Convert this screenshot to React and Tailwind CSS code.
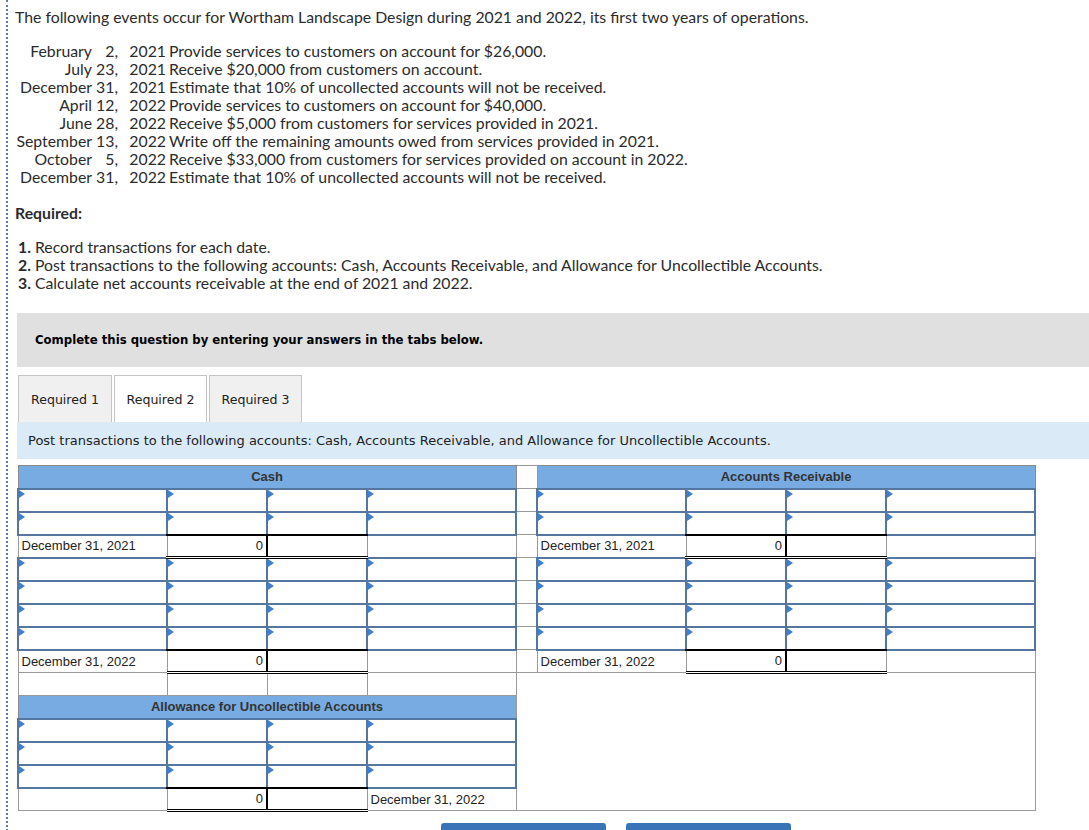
import React from 'react'

const events = [
  ['February', '2,', '2021', 'Provide services to customers on account for $26,000.'],
  ['July', '23,', '2021', 'Receive $20,000 from customers on account.'],
  ['December', '31,', '2021', 'Estimate that 10% of uncollected accounts will not be received.'],
  ['April', '12,', '2022', 'Provide services to customers on account for $40,000.'],
  ['June', '28,', '2022', 'Receive $5,000 from customers for services provided in 2021.'],
  ['September', '13,', '2022', 'Write off the remaining amounts owed from services provided in 2021.'],
  ['October', '5,', '2022', 'Receive $33,000 from customers for services provided on account in 2022.'],
  ['December', '31,', '2022', 'Estimate that 10% of uncollected accounts will not be received.'],
]

function InputCell() {
  return (
    <td className="relative border-2 border-[#55779f] bg-white p-0">
      <span className="absolute left-0 top-0 h-0 w-0 border-y-[4px] border-l-[6px] border-y-transparent border-l-[#3f7fcf]"></span>
    </td>
  )
}

function InputRow() {
  return (
    <tr className="h-[23px]">
      <InputCell />
      <InputCell />
      <InputCell />
      <InputCell />
      <td className="border border-[#9a9a9a]"></td>
      <InputCell />
      <InputCell />
      <InputCell />
      <InputCell />
    </tr>
  )
}

function BalanceCells({ label }) {
  return (
    <>
      <td className="border border-[#9a9a9a] pl-[3px]">{label}</td>
      <td className="border-t-2 border-l border-r-2 border-b-[3px] border-t-black border-l-[#9a9a9a] border-r-black border-b-black border-double pr-[3px] text-right">0</td>
      <td className="border-t-2 border-b-[3px] border-r border-t-black border-b-black border-r-[#9a9a9a] border-double"></td>
      <td className="border border-[#9a9a9a]"></td>
    </>
  )
}

function BalanceRow({ label }) {
  return (
    <tr className="h-[23px]">
      <BalanceCells label={label} />
      <td className="border border-[#9a9a9a]"></td>
      <BalanceCells label={label} />
    </tr>
  )
}

export default function App() {
  return (
    <div className="min-h-[830px] bg-white pl-[6px] text-[#2b2b2b]">
      <div className="min-h-[830px] border-l-2 border-dotted border-[#5a7aa8] pl-[7px] pt-[8px]">
        <div className="text-[15.8px] leading-[18px]" style={{ fontFamily: 'Lato, "Liberation Sans", sans-serif' }}>
          <p>The following events occur for Wortham Landscape Design during 2021 and 2022, its first two years of operations.</p>
          <div className="mt-[16px] grid grid-cols-[77px_26px_48px_1fr]">
            {events.map((e, i) => (
              <React.Fragment key={i}>
                <span className="text-right">{e[0]}</span>
                <span className="text-right">{e[1]}</span>
                <span className="text-right">{e[2]}</span>
                <span className="pl-[3px]">{e[3]}</span>
              </React.Fragment>
            ))}
          </div>
          <p className="mt-[18px] font-bold">Required:</p>
          <div className="mt-[16px] pl-[3px]">
            <p><b>1.</b> Record transactions for each date.</p>
            <p><b>2.</b> Post transactions to the following accounts: Cash, Accounts Receivable, and Allowance for Uncollectible Accounts.</p>
            <p><b>3.</b> Calculate net accounts receivable at the end of 2021 and 2022.</p>
          </div>
        </div>

        <div className="ml-[2px] mt-[21px]" style={{ fontFamily: '"DejaVu Sans", sans-serif' }}>
          <div
            className="flex h-[54px] items-center bg-[#e0e0e0] pl-[18px] text-[13px] font-bold text-black"
            style={{ fontFamily: '"DejaVu Sans Condensed", "DejaVu Sans", sans-serif' }}
          >
            Complete this question by entering your answers in the tabs below.
          </div>
          <div className="mt-[8px] flex gap-[2px] pl-[1px] text-[12.6px] text-[#222]">
            <div className="flex h-[47px] w-[94px] items-center justify-center border border-b-0 border-[#c4c4c4] bg-[#f0f0f0] pt-[2px]">Required 1</div>
            <div className="flex h-[47px] w-[93px] items-center justify-center border border-b-0 border-[#c4c4c4] bg-white pt-[2px]">Required 2</div>
            <div className="flex h-[47px] w-[93px] items-center justify-center border border-b-0 border-[#c4c4c4] bg-[#f0f0f0] pt-[2px]">Required 3</div>
          </div>
          <div className="flex h-[37px] items-center bg-[#dbeaf7] pl-[11px] text-[13px] text-[#222]">
            Post transactions to the following accounts: Cash, Accounts Receivable, and Allowance for Uncollectible Accounts.
          </div>
        </div>

        <table
          className="ml-[2px] mt-[6px] w-[1017px] table-fixed border-collapse text-[13px] text-[#222]"
          style={{ fontFamily: '"Liberation Sans", Arial, sans-serif' }}
        >
          <colgroup>
            <col className="w-[149px]" />
            <col className="w-[100px]" />
            <col className="w-[100px]" />
            <col className="w-[149px]" />
            <col className="w-[21px]" />
            <col className="w-[149px]" />
            <col className="w-[100px]" />
            <col className="w-[100px]" />
            <col className="w-[149px]" />
          </colgroup>
          <tbody>
            <tr className="h-[23px]">
              <td colSpan={4} className="border border-[#8a8a8a] bg-[#78abe2] text-center font-bold text-[#333]">Cash</td>
              <td className="border border-[#9a9a9a]"></td>
              <td colSpan={4} className="border border-[#8a8a8a] bg-[#78abe2] text-center font-bold text-[#333]">Accounts Receivable</td>
            </tr>
            <InputRow />
            <InputRow />
            <BalanceRow label="December 31, 2021" />
            <InputRow />
            <InputRow />
            <InputRow />
            <InputRow />
            <BalanceRow label="December 31, 2022" />
            <tr className="h-[23px]">
              <td className="border border-[#9a9a9a]"></td>
              <td className="border border-[#9a9a9a]"></td>
              <td className="border border-[#9a9a9a]"></td>
              <td className="border border-[#9a9a9a]"></td>
              <td colSpan={5} rowSpan={6} className="border border-[#9a9a9a]"></td>
            </tr>
            <tr className="h-[23px]">
              <td colSpan={4} className="border border-[#8a8a8a] bg-[#78abe2] text-center font-bold text-[#333]">Allowance for Uncollectible Accounts</td>
            </tr>
            {[0, 1, 2].map((i) => (
              <tr key={i} className="h-[23px]">
                <InputCell />
                <InputCell />
                <InputCell />
                <InputCell />
              </tr>
            ))}
            <tr className="h-[23px]">
              <td className="border border-[#9a9a9a]"></td>
              <td className="border-t-2 border-l border-r-2 border-b-[3px] border-t-black border-l-[#9a9a9a] border-r-black border-b-black border-double pr-[3px] text-right">0</td>
              <td className="border-t-2 border-b-[3px] border-r border-t-black border-b-black border-r-[#9a9a9a] border-double"></td>
              <td className="border border-[#9a9a9a] pl-[3px]">December 31, 2022</td>
            </tr>
          </tbody>
        </table>

        <div className="mt-[11px] flex gap-[20px] pl-[426px]">
          <div className="h-[20px] w-[165px] rounded-t-[3px] bg-[#3a74b8]"></div>
          <div className="h-[20px] w-[165px] rounded-t-[3px] bg-[#3a74b8]"></div>
        </div>
      </div>
    </div>
  )
}
